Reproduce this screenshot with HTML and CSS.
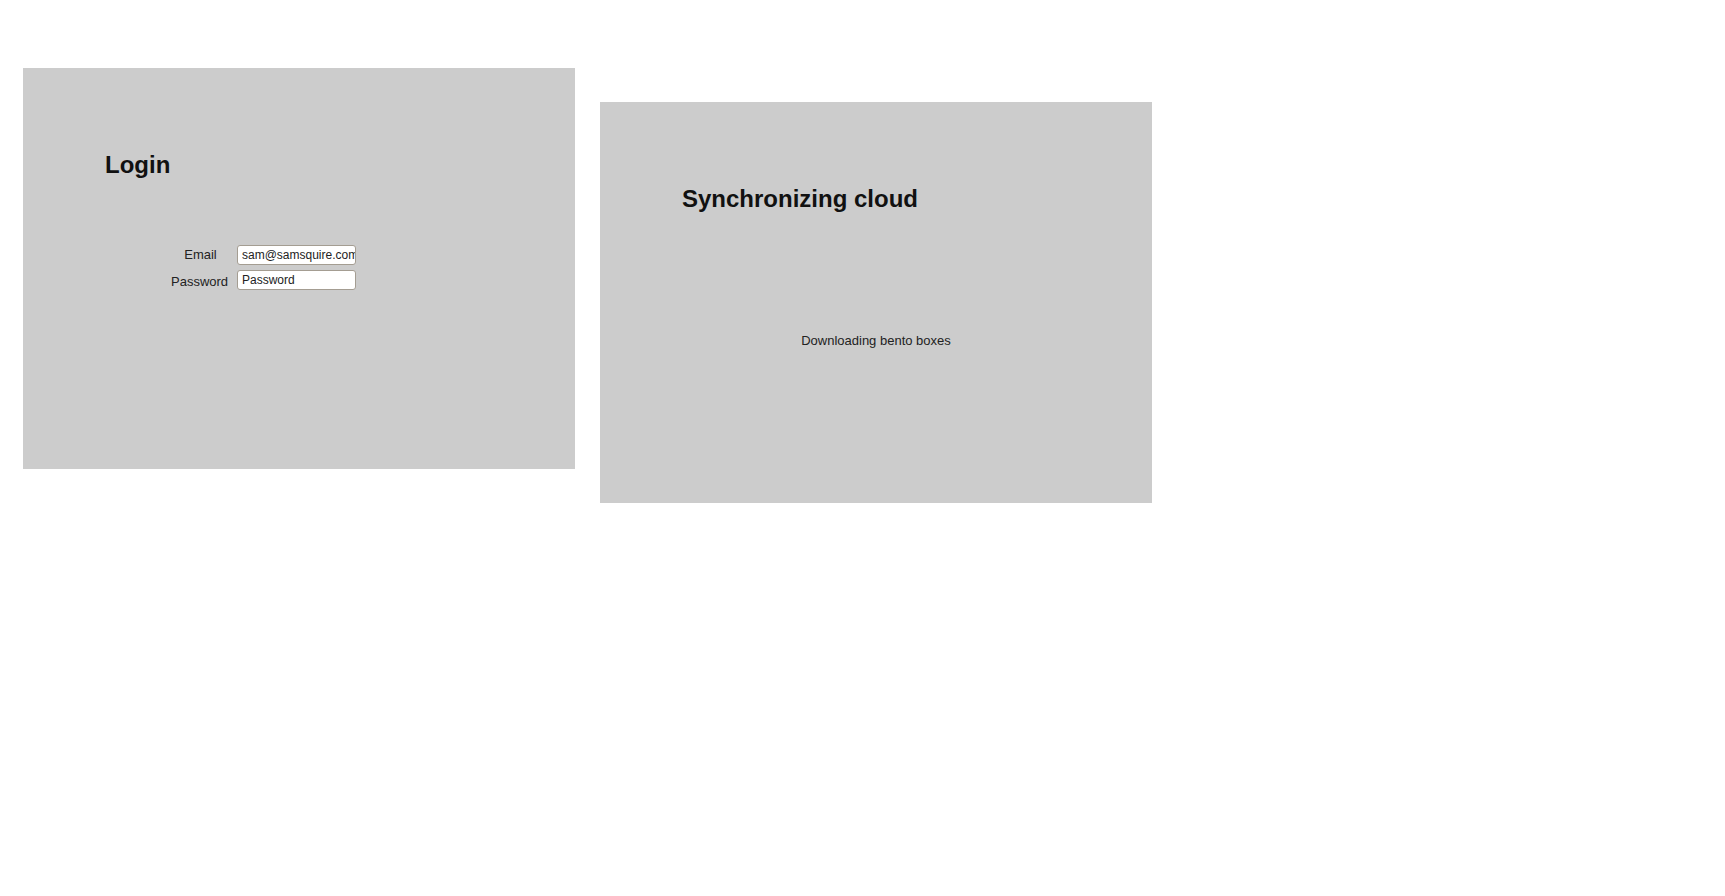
FILE: index.html
```html
<!DOCTYPE html>
<html lang="en">
<head>
<meta charset="utf-8">
<title>Login</title>
<link rel="stylesheet" href="styles.css">
</head>
<body>
<div class="stage">
  <section class="panel">
    <h2 class="title">Login</h2>
    <form class="form">
      <label class="label label-email" for="email">Email</label>
      <input class="field" id="email" type="text" value="sam@samsquire.com">
      <label class="label label-password" for="password">Password</label>
      <input class="field" id="password" type="text" value="Password">
    </form>
  </section>
  <section class="panel panel-lower">
    <h2 class="title">Synchronizing cloud</h2>
    <p class="status">Downloading bento boxes</p>
  </section>
</div>
</body>
</html>
```

FILE: styles.css
```css
html, body {
  margin: 0;
  padding: 0;
  background: #fff;
}

body {
  font-family: "Liberation Sans", Arial, sans-serif;
}

.stage {
  display: flex;
  align-items: flex-start;
  gap: 25px;
  padding: 68px 0 0 23px;
}

.panel {
  box-sizing: border-box;
  width: 552px;
  height: 401px;
  background: #cccccc;
  padding: 83px 82px 0 82px;
}

.panel-lower {
  margin-top: 34px;
}

.title {
  margin: 0;
  font-size: 24px;
  line-height: 28px;
  font-weight: bold;
  color: #111;
}

.form {
  display: grid;
  grid-template-columns: 57px 119px;
  column-gap: 9px;
  row-gap: 5px;
  align-items: center;
  margin: 66px 0 0 66px;
}

.label {
  font-size: 13px;
  line-height: 15px;
  color: #222;
  text-align: center;
}

.label-email {
  padding: 0 0 1px 2px;
}

.label-password {
  padding-top: 2px;
}

.field {
  box-sizing: border-box;
  width: 119px;
  height: 20px;
  margin: 0;
  padding: 0 0 0 4px;
  border: 1px solid #a49d92;
  border-radius: 3px;
  background: #fff;
  font-family: "Liberation Sans", Arial, sans-serif;
  font-size: 12px;
  color: #222;
  outline: none;
}

.status {
  margin: 120px 0 0 0;
  font-size: 13px;
  line-height: 15px;
  color: #222;
  text-align: center;
}
```
